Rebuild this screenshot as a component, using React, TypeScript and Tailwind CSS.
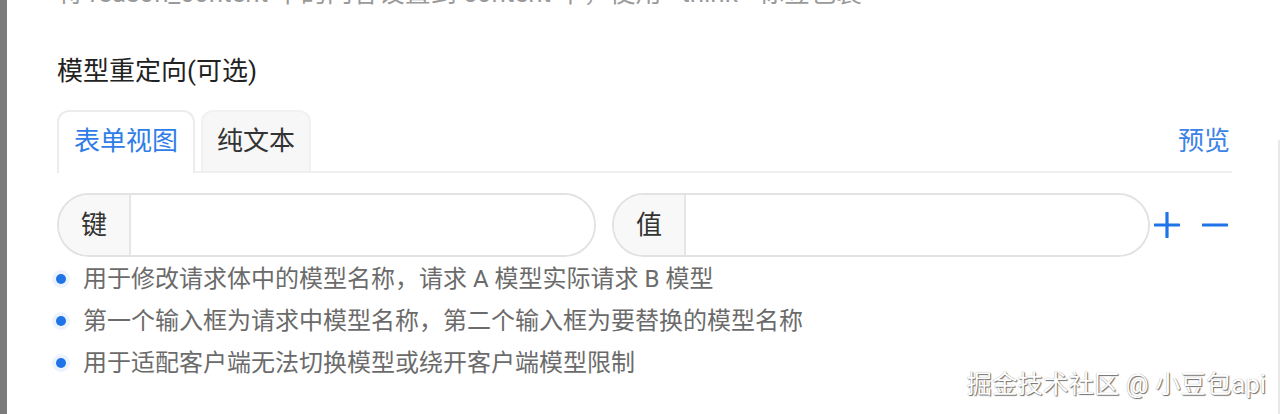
import React from 'react';

const tips = [
  '用于修改请求体中的模型名称，请求 A 模型实际请求 B 模型',
  '第一个输入框为请求中模型名称，第二个输入框为要替换的模型名称',
  '用于适配客户端无法切换模型或绕开客户端模型限制',
];

const PairInput: React.FC<{ label: string; width: string }> = ({ label, width }) => (
  <div className={`flex h-[64px] ${width} overflow-hidden rounded-full border-2 border-[#e2e2e2] bg-white`}>
    <div className="flex w-[72px] shrink-0 items-center justify-center border-r-2 border-[#e6e6e6] bg-[#f8f8f8] text-[26px] text-[#333]">
      {label}
    </div>
    <input className="min-w-0 flex-1 bg-white px-4 text-[24px] outline-none" />
  </div>
);

const App: React.FC = () => {
  return (
    <div className="relative flex h-[414px] w-full overflow-hidden bg-white font-['Roboto','Noto_Sans_CJK_SC',sans-serif]">
      {/* left edge of the sheet */}
      <div className="w-[7px] shrink-0 bg-[#7b7b7b]" />

      <div className="flex min-w-0 flex-1 flex-col pl-[50px] pr-[46px]">
        {/* previous field's help text, cut off at the top */}
        <div className="-mt-[20px] whitespace-nowrap text-[26px] leading-[26px] text-[#9a9a9a]">
          将 reason_content 中的内容设置到 content 中，使用 &lt;think&gt; 标签包装
        </div>

        <div className="mt-[52px] text-[26px] leading-[26px] text-[#222]">模型重定向(可选)</div>

        {/* tabs */}
        <div className="mt-[26px] flex items-end border-b-2 border-[#efefef]">
          <button className="-mb-[2px] rounded-t-[12px] border-2 border-b-0 border-[#ececec] bg-white px-[15px] pb-[19px] pt-[16px] text-[26px] leading-[26px] text-[#2f7de6]">
            表单视图
          </button>
          <button className="ml-[6px] rounded-t-[12px] border-2 border-b-0 border-[#f1f1f1] bg-[#f7f7f7] px-[14px] pb-[17px] pt-[16px] text-[26px] leading-[26px] text-[#333]">
            纯文本
          </button>
          <div className="flex-1" />
          <button className="mb-[17px] pr-[2px] text-[26px] leading-[26px] text-[#3b82e8]">预览</button>
        </div>

        {/* key / value row */}
        <div className="mt-[20px] flex items-center">
          <PairInput label="键" width="w-[539px]" />
          <div className="ml-[16px]">
            <PairInput label="值" width="w-[538px]" />
          </div>
          <div className="ml-[4px] flex items-center gap-[22px] text-[#1f74e8]">
            <svg width="26" height="26" viewBox="0 0 26 26">
              <path d="M13 1v24M1 13h24" stroke="currentColor" strokeWidth="3.2" strokeLinecap="round" />
            </svg>
            <svg width="26" height="26" viewBox="0 0 26 26">
              <path d="M1 13h24" stroke="currentColor" strokeWidth="3.2" strokeLinecap="round" />
            </svg>
          </div>
        </div>

        {/* help list */}
        <ul className="mt-px flex flex-col">
          {tips.map((t) => (
            <li key={t} className="flex items-center gap-[17px] text-[24px] leading-[42px] text-[#6b6b6b]">
              <span className="-ml-px h-[10px] w-[10px] shrink-0 rounded-full bg-[#1f74e8] ring-4 ring-[#edf3fd]" />
              {t}
            </li>
          ))}
        </ul>
      </div>

      {/* right panel edge */}
      <div className="w-[2px] shrink-0 pt-[140px]">
        <div className="h-full w-[2px] bg-[#e8e8e8]" />
      </div>

      {/* watermark */}
      <div className="absolute bottom-[14px] right-[14px] text-[25.5px] leading-[32px] text-white [text-shadow:1px_1px_1px_rgba(0,0,0,0.55),0_0_1px_rgba(0,0,0,0.4)]">
        掘金技术社区 @ 小豆包api
      </div>
    </div>
  );
};

export default App;
